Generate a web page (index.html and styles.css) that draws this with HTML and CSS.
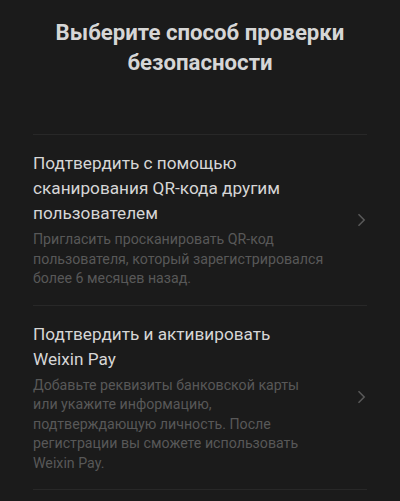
FILE: index.html
```html
<!DOCTYPE html>
<html lang="ru">
<head>
<meta charset="utf-8">
<link rel="stylesheet" href="styles.css">
</head>
<body>
<div class="page">
  <h1 class="heading">Выберите способ проверки<br>безопасности</h1>
  <ul class="options">
    <li class="option">
      <div class="option-text">
        <div class="option-title">Подтвердить с помощью сканирования QR-кода другим пользователем</div>
        <div class="option-desc">Пригласить просканировать QR-код пользователя, который зарегистрировался более 6 месяцев назад.</div>
      </div>
      <svg class="chevron" width="9" height="14" viewBox="0 0 9 14"><path d="M1.5 1.2 L7.2 7 L1.5 12.8" fill="none" stroke="#5a5a5a" stroke-width="1.5"/></svg>
    </li>
    <li class="option">
      <div class="option-text">
        <div class="option-title">Подтвердить и активировать Weixin&nbsp;Pay</div>
        <div class="option-desc">Добавьте реквизиты банковской карты или укажите информацию, подтверждающую личность. После регистрации вы сможете использовать Weixin&nbsp;Pay.</div>
      </div>
      <svg class="chevron" width="9" height="14" viewBox="0 0 9 14"><path d="M1.5 1.2 L7.2 7 L1.5 12.8" fill="none" stroke="#5a5a5a" stroke-width="1.5"/></svg>
    </li>
  </ul>
</div>
</body>
</html>
```
FILE: styles.css
```css
html, body {
  margin: 0;
  padding: 0;
  background: #1b1b1b;
}
body {
  font-family: Roboto, "Noto Sans", sans-serif;
  width: 400px;
  height: 501px;
  overflow: hidden;
}
.page {
  padding: 17px 33px 0 33px;
}
.heading {
  margin: 0;
  text-align: center;
  font-size: 22.2px;
  line-height: 30px;
  font-weight: 700;
  color: #d6d6d6;
}
.options {
  list-style: none;
  margin: 57px 0 0 0;
  padding: 0;
  border-top: 1px solid #282828;
}
.option {
  display: flex;
  align-items: center;
  padding: 16px 0;
  border-bottom: 1px solid #282828;
}
.option-text {
  flex: none;
  width: 292px;
}
.option-title {
  font-size: 17.2px;
  line-height: 25px;
  color: #d6d6d6;
}
.option-desc {
  margin-top: 4px;
  font-size: 14.2px;
  line-height: 19.5px;
  color: #585858;
}
.chevron {
  flex: none;
  margin-left: auto;
  margin-right: 1px;
}
```
